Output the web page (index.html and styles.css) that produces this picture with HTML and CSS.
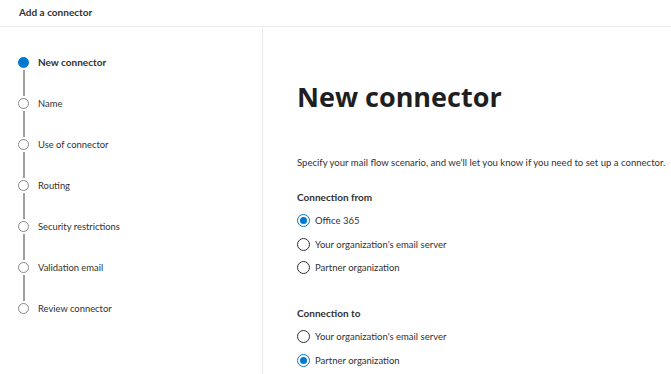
FILE: index.html
```html
<!DOCTYPE html>
<html>
<head>
<meta charset="utf-8">
<link rel="stylesheet" href="styles.css">
</head>
<body>
<header class="topbar">Add a connector</header>
<div class="main">
  <nav class="steps">
    <div class="step active"><div class="ind"><span class="dot"></span><span class="line"></span></div><span class="label">New connector</span></div>
    <div class="step"><div class="ind"><span class="dot"></span><span class="line"></span></div><span class="label">Name</span></div>
    <div class="step"><div class="ind"><span class="dot"></span><span class="line"></span></div><span class="label">Use of connector</span></div>
    <div class="step"><div class="ind"><span class="dot"></span><span class="line"></span></div><span class="label">Routing</span></div>
    <div class="step"><div class="ind"><span class="dot"></span><span class="line"></span></div><span class="label">Security restrictions</span></div>
    <div class="step"><div class="ind"><span class="dot"></span><span class="line"></span></div><span class="label">Validation email</span></div>
    <div class="step last"><div class="ind"><span class="dot"></span></div><span class="label">Review connector</span></div>
  </nav>
  <section class="content">
    <h1 class="title">New connector</h1>
    <p class="desc">Specify your mail flow scenario, and we'll let you know if you need to set up a connector.</p>
    <div class="group">
      <div class="group-title">Connection from</div>
      <label class="radio checked"><span class="circle"></span>Office 365</label>
      <label class="radio"><span class="circle"></span>Your organization's email server</label>
      <label class="radio"><span class="circle"></span>Partner organization</label>
    </div>
    <div class="group">
      <div class="group-title">Connection to</div>
      <label class="radio"><span class="circle"></span>Your organization's email server</label>
      <label class="radio checked"><span class="circle"></span>Partner organization</label>
    </div>
  </section>
</div>
</body>
</html>
```
FILE: styles.css
```css
html, body {
  margin: 0;
  padding: 0;
  background: #ffffff;
  color: #323130;
  font-family: "Lato", "Open Sans", sans-serif;
  overflow: hidden;
}
.topbar {
  height: 26px;
  line-height: 24px;
  padding-left: 19px;
  font-size: 10px;
  font-weight: 700;
  border-bottom: 1px solid #edebe9;
  box-sizing: content-box;
}
.main {
  display: flex;
  height: 347px;
}
.steps {
  flex: none;
  width: 263px;
  border-right: 1px solid #edebe9;
  padding-top: 30px;
  box-sizing: border-box;
}
.step {
  display: flex;
  height: 41px;
  padding-left: 18px;
}
.step.last { height: 20px; }
.ind {
  width: 11px;
  display: flex;
  flex-direction: column;
  align-items: center;
}
.dot {
  width: 11px;
  height: 11px;
  border-radius: 50%;
  box-sizing: border-box;
  border: 1.5px solid #8a8886;
  flex: none;
}
.step.active .dot {
  background: #0078d4;
  border-color: #0078d4;
}
.line {
  width: 2px;
  flex: 1;
  background: #a19f9d;
  margin: 2px 0 2px;
}
.label {
  margin-left: 9px;
  font-size: 9.4px;
  line-height: 11px;
  color: #323130;
}
.step.active .label { font-weight: 700; font-size: 10px; }
.content {
  flex: 1;
  min-width: 0;
  padding-left: 34px;
  padding-top: 50px;
}
.title {
  margin: 0;
  font-family: "Open Sans", sans-serif;
  font-size: 27px;
  font-weight: 700;
  line-height: 40px;
  color: #201f1e;
}
.desc {
  margin: 39px 0 0;
  font-size: 9.55px;
  line-height: 14px;
  white-space: nowrap;
}
.group { margin-top: 20px; }
.group + .group { margin-top: 26px; }
.group-title {
  font-size: 10px;
  font-weight: 700;
  line-height: 14px;
  margin-bottom: 5px;
}
.radio {
  display: flex;
  align-items: center;
  height: 23.6px;
  font-size: 9.5px;
}
.circle {
  width: 13px;
  height: 13px;
  border-radius: 50%;
  border: 1px solid #323130;
  box-sizing: border-box;
  margin-right: 5px;
  position: relative;
}
.radio.checked .circle { border-color: #0078d4; }
.radio.checked .circle::after {
  content: "";
  position: absolute;
  left: 2px; top: 2px;
  width: 7px; height: 7px;
  border-radius: 50%;
  background: #0078d4;
}
```
